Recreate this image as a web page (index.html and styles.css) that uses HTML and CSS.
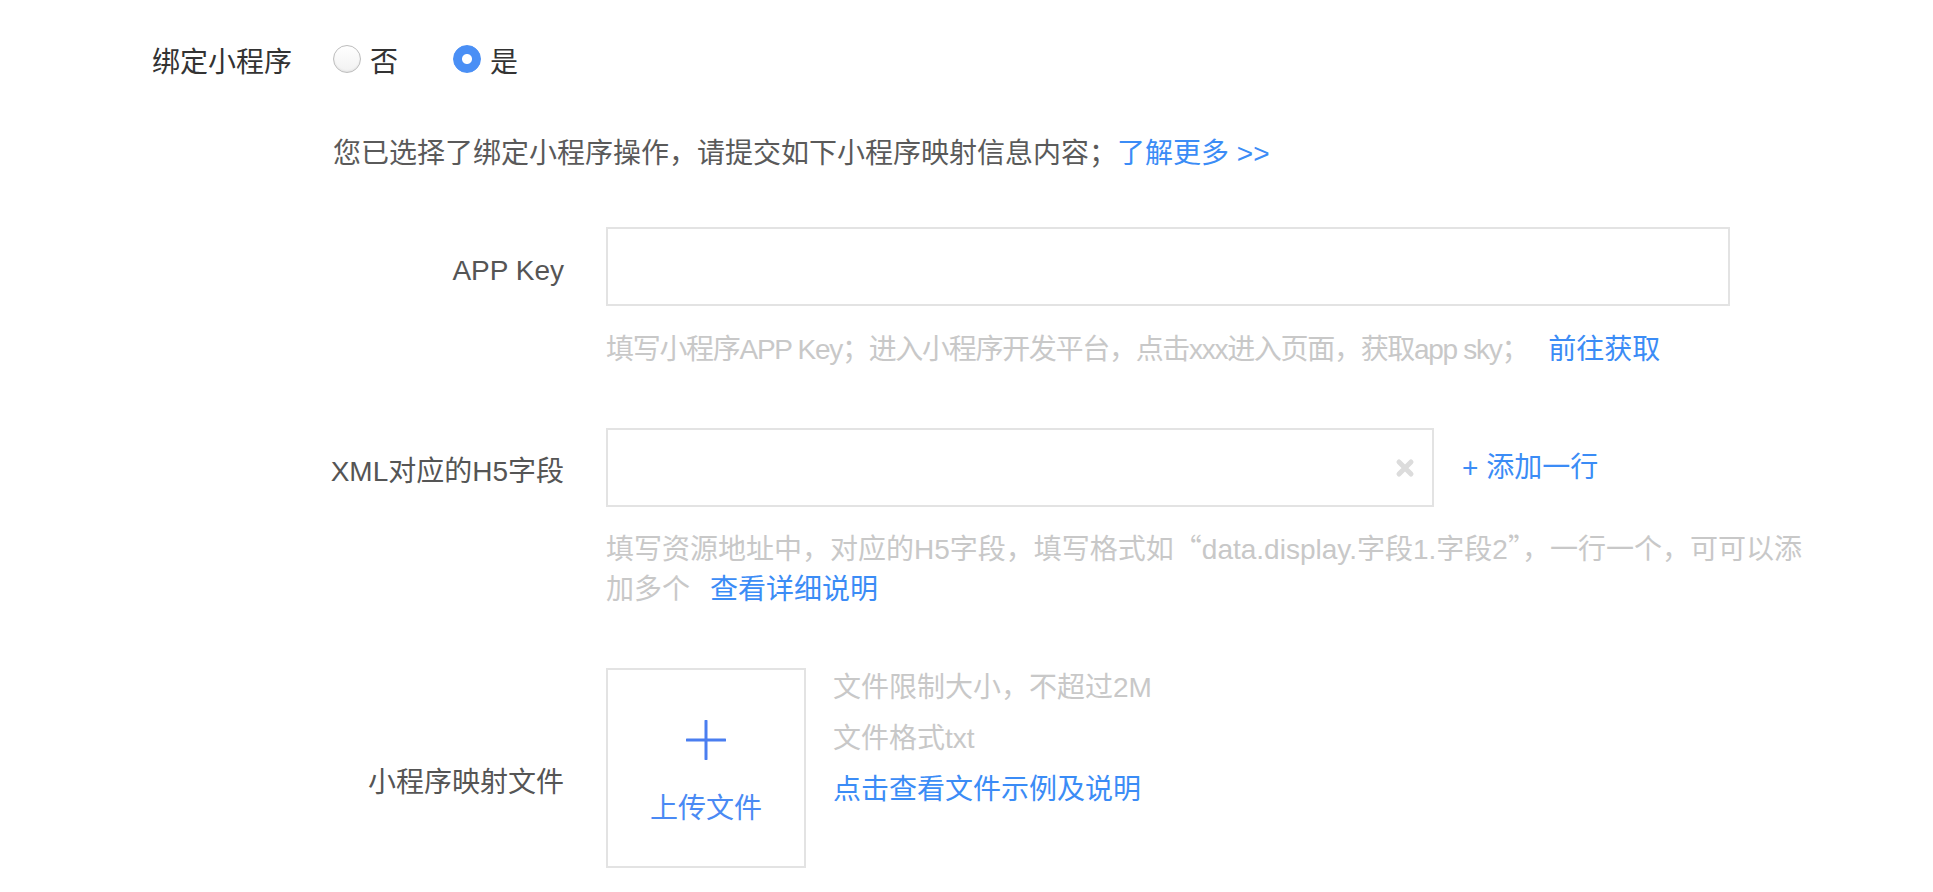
FILE: index.html
```html
<!DOCTYPE html>
<html lang="zh-CN">
<head>
<meta charset="utf-8">
<title>绑定小程序</title>
<link rel="stylesheet" href="styles.css">
</head>
<body>
<div class="page">
  <div class="row-bind">
    <span class="bind-label">绑定小程序</span>
    <div class="radio-group">
      <label class="radio"><input type="radio" name="bind"><span>否</span></label>
      <label class="radio"><input type="radio" name="bind" checked><span>是</span></label>
    </div>
  </div>

  <p class="desc">您已选择了绑定小程序操作，请提交如下小程序映射信息内容；<a class="link" href="#">了解更多 &gt;&gt;</a></p>

  <div class="form">
    <div class="field">
      <label class="field-label">APP Key</label>
      <div class="field-body">
        <div class="input-box wide"><input class="input" type="text"></div>
        <p class="hint hint-first"><span class="hint-tight">填写小程序APP Key；进入小程序开发平台，点击xxx进入页面，获取app sky；</span><a class="link spaced" href="#">前往获取</a></p>
      </div>
    </div>

    <div class="field">
      <label class="field-label">XML对应的H5字段</label>
      <div class="field-body">
        <div class="control-row">
          <div class="input-box mid">
            <input class="input" type="text">
            <span class="clear-icon">
              <svg width="20" height="20" viewBox="0 0 20 20"><path d="M4 4L16 16M16 4L4 16" stroke="#dcdcdc" stroke-width="5" stroke-linecap="round" fill="none"/></svg>
            </span>
          </div>
          <a class="link add-link" href="#">+ 添加一行</a>
        </div>
        <p class="hint hint-wrap">填写资源地址中，对应的H5字段，填写格式如<span class="cjk">“</span>data.display.字段1.字段2<span class="cjk">”</span>，一行一个，可可以添加多个<a class="link spaced" href="#">查看详细说明</a></p>
      </div>
    </div>

    <div class="field">
      <label class="field-label upload-label">小程序映射文件</label>
      <div class="upload-row">
        <div class="upload-box">
          <svg class="upload-plus" width="40" height="40" viewBox="0 0 40 40"><path d="M20 1V39M1 20H39" stroke="#4a7ef0" stroke-width="3" stroke-linecap="round" fill="none"/></svg>
          <span class="upload-text">上传文件</span>
        </div>
        <div class="upload-tips">
          <p class="tip">文件限制大小，不超过2M</p>
          <p class="tip">文件格式txt</p>
          <p class="tip"><a class="link" href="#">点击查看文件示例及说明</a></p>
        </div>
      </div>
    </div>
  </div>
</div>
</body>
</html>
```

FILE: styles.css
```css
* { box-sizing: border-box; }

html, body {
  margin: 0;
  padding: 0;
  background: #ffffff;
}

body {
  font-family: "Liberation Sans", "Noto Sans CJK SC", sans-serif;
  font-size: 28px;
  line-height: 40px;
  color: #333333;
}

p { margin: 0; }

.cjk {
  font-family: "Noto Sans CJK SC", sans-serif;
}

.page {
  padding: 43px 0 0 152px;
}

.link {
  color: #3b8cf6;
  text-decoration: none;
  letter-spacing: 0;
}

.row-bind {
  display: flex;
  align-items: center;
  height: 40px;
}

.bind-label {
  width: 181px;
  color: #333333;
}

.radio-group {
  display: flex;
  align-items: center;
  gap: 55px;
}

.radio {
  display: flex;
  align-items: center;
  gap: 9px;
  color: #333333;
}

.radio input {
  appearance: none;
  -webkit-appearance: none;
  margin: 0 0 8px 0;
  width: 28px;
  height: 28px;
  border-radius: 50%;
  border: 1px solid #bdbdbd;
  background: linear-gradient(#ffffff, #f2f2f2);
  box-shadow: inset 0 -1px 2px rgba(0,0,0,0.07);
}

.radio input:checked {
  border-color: #4a8ff5;
  background: radial-gradient(circle, #ffffff 0 4.5px, #4a8ff5 5.5px);
  box-shadow: none;
}

.desc {
  margin: 51px 0 0 181px;
  color: #5a5a5a;
}

.form {
  margin-top: 53px;
}

.field {
  display: grid;
  grid-template-columns: 412px auto;
  column-gap: 42px;
  align-items: start;
}

.field + .field {
  margin-top: 58px;
}

.field-label {
  height: 79px;
  padding-top: 8px;
  display: flex;
  align-items: center;
  justify-content: flex-end;
  color: #555555;
}

.upload-label {
  height: auto;
  padding-top: 95px;
}

.input-box {
  height: 79px;
  border: 2px solid #e3e3e3;
  display: flex;
  align-items: center;
  background: #ffffff;
}

.input-box.wide { width: 1124px; }
.input-box.mid { width: 828px; padding-right: 17px; }

.input {
  flex: 1;
  min-width: 0;
  height: 100%;
  border: none;
  outline: none;
  background: transparent;
  padding: 0 20px;
  font: inherit;
  color: #333333;
}

.clear-icon {
  display: flex;
  width: 20px;
  height: 20px;
}

.control-row {
  display: flex;
  align-items: center;
}

.add-link {
  margin-left: 28px;
}

.hint {
  margin-top: 20px;
  color: #c8c8c8;
}

.hint-first {
  margin-top: 24px;
}

.hint-tight {
  letter-spacing: -1.3px;
}

.hint-wrap {
  width: 1215px;
}

.spaced {
  margin-left: 20px;
}

.upload-row {
  display: flex;
  align-items: flex-start;
}

.upload-box {
  width: 200px;
  height: 200px;
  border: 2px solid #e3e3e3;
  display: flex;
  flex-direction: column;
  align-items: center;
  padding-top: 50px;
}

.upload-plus {
  display: block;
}

.upload-text {
  margin-top: 29px;
  color: #4a8af4;
}

.upload-tips {
  margin-left: 27px;
  margin-top: -6px;
}

.tip {
  line-height: 51px;
  color: #c8c8c8;
}
```
